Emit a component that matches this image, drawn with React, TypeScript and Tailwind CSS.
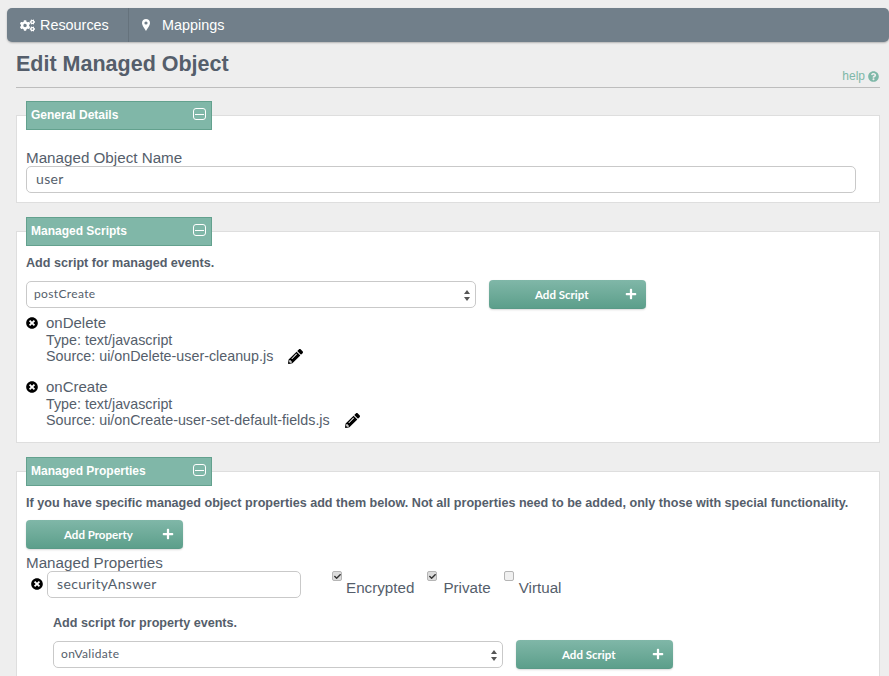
import type { ReactNode } from 'react'
import { FaCogs, FaTimesCircle, FaPencilAlt, FaQuestionCircle, FaPlus, FaCheck } from 'react-icons/fa'

const ARIAL = "font-['Liberation_Sans',Arial,sans-serif]"
const LATO = "font-['Lato','Open_Sans',sans-serif]"

function SectionHead({ title }: { title: string }) {
  return (
    <div className={`-mt-[15px] ml-[9px] w-[186px] h-[29px] bg-[#80b7a8] border border-[#63a18e] flex items-center justify-between pl-[4px] pr-[5px] text-white text-[12px] font-bold ${ARIAL}`}>
      <span className="pb-[2px]">{title}</span>
      <span className="mb-[3px] w-[13px] h-[12px] rounded-[3px] border border-white flex items-center justify-center">
        <span className="w-[9px] h-px bg-white" />
      </span>
    </div>
  )
}

function Panel({ title, className, children }: { title: string; className: string; children: ReactNode }) {
  return (
    <section className={`bg-white border border-[#dedede] ${className}`}>
      <SectionHead title={title} />
      {children}
    </section>
  )
}

function GreenButton({ label, labelClass }: { label: string; labelClass: string }) {
  return (
    <div className={`relative w-[157px] h-[29px] rounded-[4px] bg-gradient-to-b from-[#80b7a8] to-[#5c9f8b] border-b border-[#5a9a87] shadow-[0_1px_2px_rgba(0,0,0,0.15)] text-white text-[11.5px] font-bold flex items-center ${LATO}`}>
      <span className={`pt-[1px] ${labelClass}`}>{label}</span>
      <FaPlus className="absolute right-[9px] top-[8px] text-[12px]" />
    </div>
  )
}

function SelectBox({ value, className }: { value: string; className: string }) {
  return (
    <div className={`relative h-[27px] rounded-[5px] border border-[#c9c9c9] bg-white flex items-center pl-[7px] pb-[2px] text-[12px] tracking-[0.35px] text-[#555e6b] ${LATO} ${className}`}>
      {value}
      <svg className="absolute right-[4px] top-[8px]" width="8" height="11" viewBox="0 0 8 11">
        <path d="M4 0 L7 4 L1 4 Z M1 7 L7 7 L4 11 Z" fill="#555" />
      </svg>
    </div>
  )
}

function TextBox({ value, className }: { value: string; className: string }) {
  return (
    <div className={`h-[27px] rounded-[5px] border border-[#c9c9c9] bg-white flex items-center pl-[9px] pb-[2px] text-[14px] tracking-[0.35px] text-[#555e6b] ${LATO} ${className}`}>
      {value}
    </div>
  )
}

function ScriptItem({ name, source }: { name: string; source: string }) {
  return (
    <div className={`flex text-[14.3px] leading-[16px] text-[#555e6b] ${ARIAL}`}>
      <FaTimesCircle className="mt-[3px] mr-[8px] text-[12px] text-black shrink-0" />
      <div>
        <div className="text-[15px] leading-[16px] pt-[1px] mb-[1px]">{name}</div>
        <div>Type: text/javascript</div>
        <div className="flex items-center">
          Source: ui/{source}
          <FaPencilAlt className="ml-[15px] text-[15px] text-black" />
        </div>
      </div>
    </div>
  )
}

function Check({ label, checked, boxClass, labelClass }: { label: string; checked: boolean; boxClass: string; labelClass: string }) {
  return (
    <div className={`flex items-start ${boxClass}`}>
      <span className={`w-[10px] h-[10px] rounded-[2px] border border-[#b5b5b5] flex items-center justify-center ${checked ? 'bg-[#dcdcdc]' : 'bg-[#f0f0f0]'}`}>
        {checked && <FaCheck className="text-[7px] text-[#333]" />}
      </span>
      <span className={`mt-[8px] text-[15.2px] leading-[18px] ${labelClass}`}>{label}</span>
    </div>
  )
}

export default function App() {
  return (
    <div className={`h-[676px] overflow-hidden bg-[#eeeeee] pt-[8px] pl-[7px] text-[#555e6b] ${ARIAL}`}>
      <nav className="h-[34px] bg-[#717f8a] rounded-[5px] shadow-[0_1px_2px_rgba(0,0,0,0.25)] flex items-center text-white text-[14.4px]">
        <div className="w-[122px] h-full border-r border-[#65727c] flex items-center pl-[13px] pt-[1px] gap-[5px]">
          <FaCogs className="text-[15px]" />
          <span>Resources</span>
        </div>
        <div className="flex items-center pl-[13px] pt-[1px] gap-[12px]">
          <svg width="8" height="12" viewBox="0 0 8 12">
            <path fillRule="evenodd" fill="#fff" d="M4 0 C1.8 0 0 1.7 0 3.9 C0 6.6 3 10 4 12 C5 10 8 6.6 8 3.9 C8 1.7 6.2 0 4 0 Z M4 2.4 A1.6 1.6 0 1 1 4 5.6 A1.6 1.6 0 1 1 4 2.4 Z" />
          </svg>
          <span>Mappings</span>
        </div>
      </nav>

      <div className="pl-[9px] pr-[9px]">
        <div className="h-[46px] border-b border-[#bdbdbd] flex justify-between">
          <h1 className="mt-[9px] text-[21.5px] leading-[26px] font-bold text-[#555e6b]">Edit Managed Object</h1>
          <div className="mt-[27px] pr-[1px] flex items-center gap-[3px] h-[14px] text-[12px] text-[#7fb8a8]">
            help
            <FaQuestionCircle className="text-[11px]" />
          </div>
        </div>

        <Panel title="General Details" className="mt-[27px] h-[88px]">
          <div className="ml-[9px] mt-[20px] text-[15.2px] leading-[16px]">Managed Object Name</div>
          <TextBox value="user" className="ml-[9px] w-[830px]" />
        </Panel>

        <Panel title="Managed Scripts" className="mt-[28px] h-[212px]">
          <div className="ml-[9px] mt-[10px] text-[12.6px] leading-[14px] font-bold">Add script for managed events.</div>
          <div className="ml-[9px] mt-[10px] flex items-start">
            <SelectBox value="postCreate" className="w-[450px] mt-[1px]" />
            <div className="ml-[13px]">
              <GreenButton label="Add Script" labelClass="ml-[46px]" />
            </div>
          </div>
          <div className="ml-[9px] mt-[5px] flex flex-col gap-[14px]">
            <ScriptItem name="onDelete" source="onDelete-user-cleanup.js" />
            <ScriptItem name="onCreate" source="onCreate-user-set-default-fields.js" />
          </div>
        </Panel>

        <Panel title="Managed Properties" className="mt-[28px] h-[260px]">
          <div className="ml-[9px] mt-[10px] text-[12.6px] leading-[14px] font-bold whitespace-nowrap">
            If you have specific managed object properties add them below. Not all properties need to be added, only those with special functionality.
          </div>
          <div className="ml-[9px] mt-[10px]">
            <GreenButton label="Add Property" labelClass="ml-[38px]" />
          </div>
          <div className="ml-[9px] mt-[6px] text-[15.2px] leading-[16px]">Managed Properties</div>
          <div className="ml-[14px] flex items-start">
            <FaTimesCircle className="mt-[7px] mr-[4px] text-[12px] text-black" />
            <TextBox value="securityAnswer" className="w-[254px]" />
            <div className="flex text-[#555e6b]">
              <Check label="Encrypted" checked boxClass="ml-[31px]" labelClass="ml-[4px]" />
              <Check label="Private" checked boxClass="ml-[13px]" labelClass="ml-[6px]" />
              <Check label="Virtual" checked={false} boxClass="ml-[13px]" labelClass="ml-[5px]" />
            </div>
          </div>
          <div className="ml-[36px] mt-[18px] text-[12.6px] leading-[14px] font-bold">Add script for property events.</div>
          <div className="ml-[36px] mt-[10px] flex items-start">
            <SelectBox value="onValidate" className="w-[450px] mt-[1px]" />
            <div className="ml-[13px]">
              <GreenButton label="Add Script" labelClass="ml-[46px]" />
            </div>
          </div>
        </Panel>
      </div>
    </div>
  )
}
